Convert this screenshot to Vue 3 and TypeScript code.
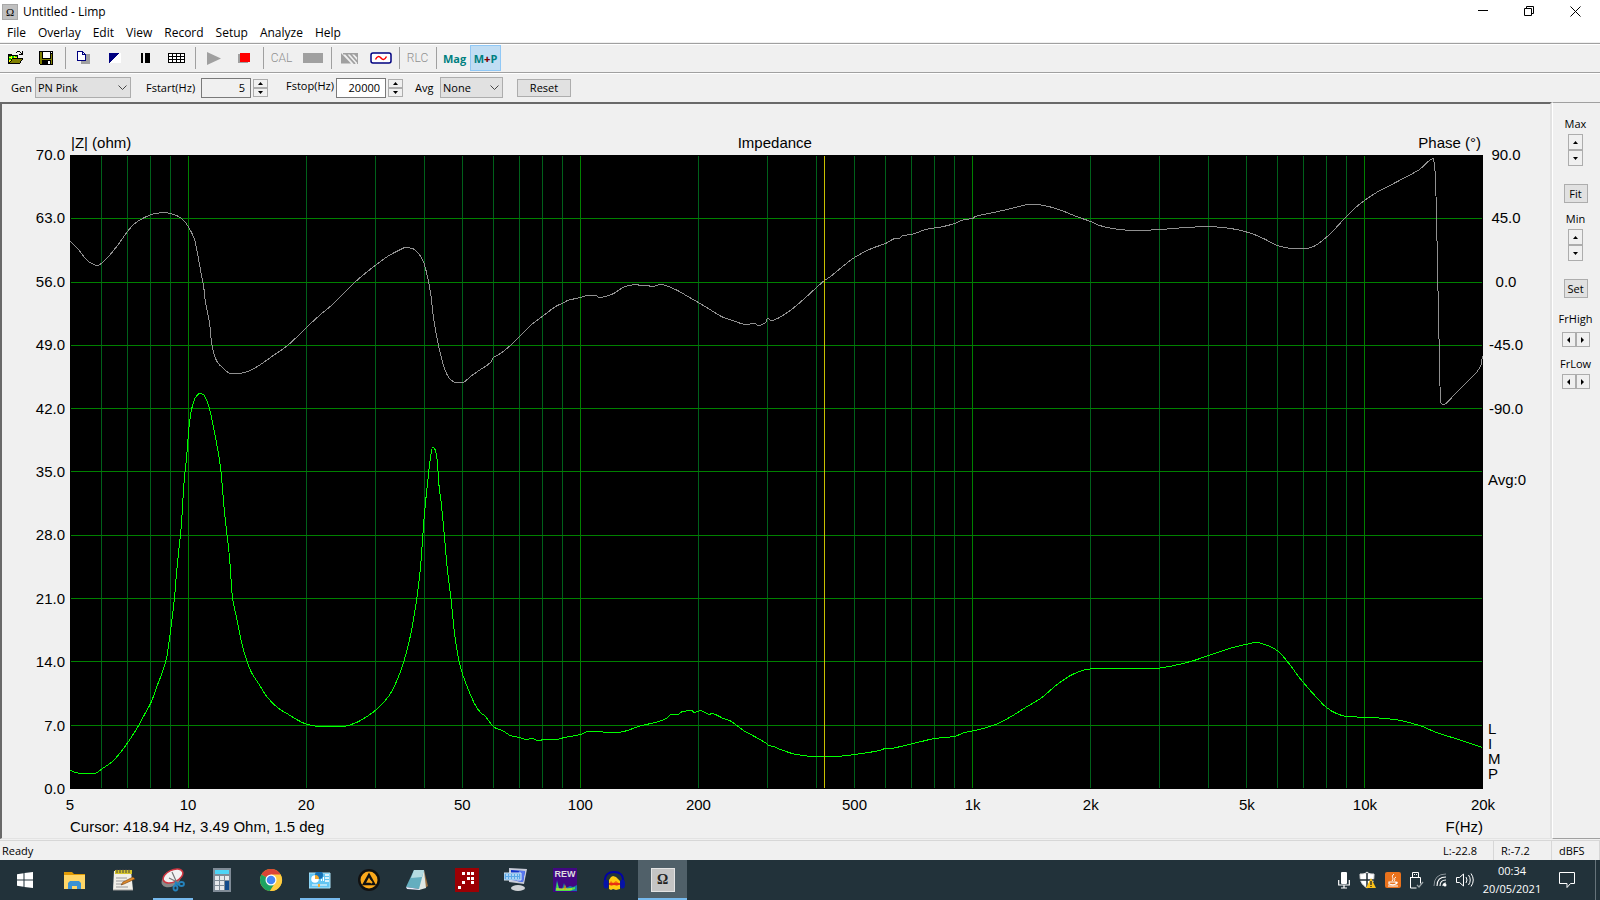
<script setup lang="ts">
import { ref } from 'vue'

type Point = [number, number]

const W = 1413
const H = 634
const F_MIN = 5
const F_MAX = 20000

const menus = ['File', 'Overlay', 'Edit', 'View', 'Record', 'Setup', 'Analyze', 'Help']
const magLabels = ['70.0', '63.0', '56.0', '49.0', '42.0', '35.0', '28.0', '21.0', '14.0', '7.0', '0.0']
const phaseLabels = ['90.0', '45.0', '0.0', '-45.0', '-90.0']
const freqLabels = [
  { f: 5, text: '5' }, { f: 10, text: '10' }, { f: 20, text: '20' }, { f: 50, text: '50' },
  { f: 100, text: '100' }, { f: 200, text: '200' }, { f: 500, text: '500' }, { f: 1000, text: '1k' },
  { f: 2000, text: '2k' }, { f: 5000, text: '5k' }, { f: 10000, text: '10k' }, { f: 20000, text: '20k' },
]

const generator = ref('PN Pink')
const averaging = ref('None')
const fStart = ref('5')
const fStop = ref('20000')

const ratio = (f: number): number => Math.log(f / F_MIN) / Math.log(F_MAX / F_MIN)
const xOf = (f: number): number => Math.round(ratio(f) * (W - 1)) + 0.5

const verticals: { x: number; major: boolean }[] = []
for (const decade of [1, 10, 100, 1000, 10000]) {
  for (let n = 1; n < 10; n++) {
    const f = n * decade
    if (f > F_MIN && f < F_MAX) verticals.push({ x: xOf(f), major: n === 1 })
  }
}
const horizontals = Array.from({ length: 9 }, (_, i) => Math.floor((i + 1) * 63.3 + 0.49) + 0.5)
const cursorX = xOf(418.94)

const phase: Point[] = [
  [0, 86], [7, 93], [18, 106], [27, 110], [32, 107], [38, 101], [47, 90], [57, 76], [63, 69], [74, 62],
  [85, 58], [93, 57], [100, 58], [108, 61], [114, 66], [120, 75], [124, 84], [127, 98], [131, 120], [133, 130],
  [135, 147], [139, 167], [141, 187], [144, 200], [147, 207], [153, 213], [160, 218], [167, 218], [177, 216],
  [190, 209], [200, 202], [217, 190], [236, 172], [250, 159], [262, 149], [283, 128], [297, 116], [306, 109],
  [317, 101], [330, 94], [335, 92], [342, 93], [347, 97], [352, 104], [355, 113], [360, 137], [363, 162],
  [368, 190], [374, 213], [379, 223], [385, 227], [392, 227], [400, 221], [410, 214], [420, 207], [423, 202],
  [430, 198], [441, 189], [450, 180], [460, 170], [473, 160], [487, 150], [492, 148], [497, 145], [510, 142],
  [517, 140], [525, 140], [529, 142], [541, 139], [555, 131], [566, 129], [570, 130], [576, 130], [582, 131],
  [590, 129], [605, 134], [619, 142], [628, 147], [641, 155], [653, 162], [662, 165], [676, 169], [684, 168],
  [688, 170], [695, 167], [697, 163], [701, 165], [707, 163], [721, 154], [734, 143], [746, 132], [754, 125],
  [760, 121], [771, 112], [784, 102], [801, 93], [815, 88], [825, 83], [829, 83], [832, 80], [841, 79],
  [855, 74], [873, 71], [884, 68], [894, 64], [902, 63], [905, 61], [923, 57], [941, 53], [959, 49], [966, 49],
  [978, 51], [991, 55], [1006, 61], [1020, 66], [1029, 70], [1049, 74], [1065, 75], [1090, 74], [1116, 72],
  [1138, 71], [1152, 72], [1166, 74], [1181, 78], [1195, 84], [1207, 90], [1222, 93], [1236, 93], [1245, 90],
  [1252, 85], [1261, 77], [1274, 63], [1284, 53], [1294, 45], [1306, 37], [1327, 26], [1349, 14], [1363, 3],
  [1364, 11], [1365, 22], [1366, 63], [1367, 107], [1368, 162], [1369, 203], [1370, 247], [1373, 249],
  [1384, 239], [1399, 224], [1410, 211], [1412, 201],
]

const impedance: Point[] = [
  [0, 615], [5, 617], [11, 618], [24, 618], [32, 613], [42, 606], [53, 593], [60, 583],
  [67, 572], [74, 559], [81, 546], [86, 532], [91, 519], [96, 503], [98, 490], [101, 468], [104, 442],
  [106, 418], [109, 388], [111, 368], [112, 350], [114, 322], [116, 303], [119, 267], [122, 250], [125, 242],
  [129, 238], [133, 239], [137, 247], [139, 253], [142, 267], [145, 282], [150, 312], [154, 357], [159, 402],
  [162, 442], [166, 462], [170, 482], [174, 498], [181, 517], [188, 528], [197, 542], [207, 552], [218, 559],
  [237, 569], [250, 571], [272, 571], [286, 567], [298, 560], [306, 554], [318, 541], [326, 526], [333, 507],
  [340, 480], [346, 445], [350, 412], [352, 385], [354, 358], [357, 328], [360, 302], [362, 292], [364, 293],
  [367, 307], [368, 325], [371, 350], [374, 382], [377, 415], [381, 448], [384, 478], [390, 512], [397, 532],
  [405, 550], [411, 558], [414, 560], [424, 572], [432, 575], [440, 580], [449, 582], [456, 584], [461, 583],
  [468, 585], [474, 584], [485, 584], [494, 582], [510, 579], [518, 576], [546, 577], [553, 576], [571, 570],
  [585, 567], [596, 563], [601, 559], [607, 559], [612, 556], [621, 555], [624, 557], [630, 555], [639, 559],
  [641, 558], [653, 563], [659, 565], [673, 575], [696, 588], [698, 590], [703, 591], [710, 594], [726, 599],
  [744, 601], [764, 601], [784, 599], [809, 595], [815, 593], [820, 593], [830, 591], [851, 586], [864, 583],
  [884, 581], [894, 577], [909, 574], [925, 569], [939, 562], [955, 552], [970, 543], [988, 528], [1002, 519],
  [1016, 514], [1024, 513], [1052, 513], [1084, 513], [1093, 512], [1120, 506], [1141, 499], [1159, 493],
  [1175, 489], [1186, 487], [1197, 490], [1208, 496], [1216, 505], [1232, 526], [1247, 543], [1256, 552],
  [1266, 558], [1276, 561], [1300, 562], [1324, 564], [1349, 570], [1366, 577], [1388, 584], [1412, 592],
]

// Monotone cubic interpolation: smooth between samples without overshooting them.
function toCurve(pts: Point[]): string {
  const slopes = pts.slice(1).map(([x, y], i) => (y - pts[i][1]) / (x - pts[i][0]))
  const tangents = pts.map((_, i) => {
    if (i === 0) return slopes[0]
    if (i === pts.length - 1) return slopes[i - 1]
    const a = slopes[i - 1]
    const b = slopes[i]
    return a * b <= 0 ? 0 : (2 * a * b) / (a + b)
  })
  let d = `M${pts[0][0] + 0.5} ${pts[0][1] + 0.5}`
  for (let i = 1; i < pts.length; i++) {
    const [x0, y0] = pts[i - 1]
    const [x1, y1] = pts[i]
    const h = (x1 - x0) / 3
    d += `C${x0 + h + 0.5} ${y0 + h * tangents[i - 1] + 0.5} ${x1 - h + 0.5} ${y1 - h * tangents[i] + 0.5} ${x1 + 0.5} ${y1 + 0.5}`
  }
  return d
}
</script>

<template>
  <div class="window">
    <header class="titlebar">
      <span class="app-icon">Ω</span>
      <h1>Untitled - Limp</h1>
      <div class="caption-buttons">
        <button aria-label="Minimize"><svg width="11" height="11"><path d="M0 4.500h10" stroke="#000" /></svg></button>
        <button aria-label="Restore"><svg width="11" height="11"><path d="M.5 2.500h7v7h-7zM2.500 2V.5h7v7H8" fill="none" stroke="#000" /></svg></button>
        <button aria-label="Close"><svg width="11" height="11"><path d="M.5.5l10 10M10.500.5l-10 10" stroke="#000" /></svg></button>
      </div>
    </header>

    <nav class="menubar">
      <button v-for="m in menus" :key="m">{{ m }}</button>
    </nav>

    <div class="toolbar">
      <button class="tool" aria-label="Open">
        <svg width="18" height="16" shape-rendering="crispEdges">
          <path d="M1 4h4v1h6v3H6l-4 6H1z" fill="#ff0" /><path d="M2 5h2v2H2zM5 6h2v2H5zM8 6h2v1H8zM2 8h2v2H2z" fill="#0c0" />
          <path d="M6 8h10l-4 6H2z" fill="#808000" /><path d="M1 4h4v1h6v1H1zM1 4h1v10H1zM10 5h1v3h-1zM5 8h11v1H5zM4 9h1v2H4zM3 11h1v1H3zM2 12h1v2H2zM15 9h1v1h-1zM14 10h1v1h-1zM13 11h1v2h-1zM12 13h1v1h-1zM1 13h11v1H1zM9 2h1v1H9zM10 1h3v1h-3zM13 2h1v1h-1zM12 4h4v1h-4zM15 1h1v4h-1zM14 3h1v1h-1z" />
        </svg>
      </button>
      <button class="tool" aria-label="Save">
        <svg width="15" height="15" shape-rendering="crispEdges">
          <path d="M0 0h14v14H1l-1-1z" /><path d="M1 1h2v7h9V3h1v10h-1V9H3v4H1z" fill="#808000" /><path d="M4 1h7v6H4zM9 10h2v3H9zM12 1h1v1h-1z" fill="#fff" />
        </svg>
      </button>
      <i class="sep"></i>
      <button class="tool" aria-label="Copy">
        <svg width="15" height="14" shape-rendering="crispEdges">
          <path d="M5 3h9v10H5z" fill="#a0a0a0" /><path d="M1.500.5h5l3 3v6h-8zM6.500.5v3h3" fill="#fff" stroke="#000080" />
        </svg>
      </button>
      <button class="tool" aria-label="Black and white">
        <svg width="12" height="11" shape-rendering="crispEdges"><path d="M0 0h12v10H0z" fill="#fff" /><path d="M0 0h10L0 10z" fill="#000080" /></svg>
      </button>
      <button class="tool" aria-label="Overlay bars">
        <svg width="11" height="11" shape-rendering="crispEdges"><path d="M1 0h2v10H1zM5 0h5v10H5z" /></svg>
      </button>
      <button class="tool" aria-label="Grid">
        <svg width="18" height="11" shape-rendering="crispEdges">
          <path d="M.5.5h16v9H.5zM.5 3.500h16M.5 6.500h16M4.500.5v9M8.500.5v9M12.500.5v9" fill="#fff" stroke="#000" />
        </svg>
      </button>
      <i class="sep"></i>
      <button class="tool" aria-label="Start recording"><svg width="16" height="13"><path d="M1 0l14 6.500L1 13z" fill="#a0a0a0" /></svg></button>
      <button class="tool" aria-label="Stop recording">
        <svg width="13" height="12" shape-rendering="crispEdges"><path d="M0 2h10v9H0z" fill="#a0a0a0" /><path d="M2 1h10v9H2z" fill="#f00" /></svg>
      </button>
      <i class="sep"></i>
      <button class="tool mono">CAL</button>
      <button class="tool" aria-label="Calibrated"><svg width="20" height="10"><path d="M0 0h20v10H0z" fill="#a0a0a0" /></svg></button>
      <i class="sep"></i>
      <button class="tool" aria-label="Hatching">
        <svg width="17" height="11">
          <path d="M0 0l10 10.500H0z" fill="#a0a0a0" /><path d="M2 .5h15V11M4 0l10 11M8.500 0l8 9M13 0l4 4" stroke="#a0a0a0" stroke-width="1.800" fill="none" />
        </svg>
      </button>
      <button class="tool" aria-label="Generator">
        <svg width="22" height="12"><rect x="1" y="1" width="20" height="10" rx="2" fill="#fff" stroke="#000080" stroke-width="1.500" /><path d="M5.500 7.500q2.500-5 5.500-1.500t5.500-1.500" fill="none" stroke="#f00" stroke-width="1.500" /></svg>
      </button>
      <i class="sep"></i>
      <button class="tool mono">RLC</button>
      <i class="sep"></i>
      <button class="tool mag">Mag</button>
      <button class="tool mag active">M<b>+</b>P</button>
    </div>

    <form class="settings" @submit.prevent>
      <label for="gen">Gen</label>
      <span class="select gen">
        <select id="gen" v-model="generator"><option>PN Pink</option></select>
        <svg width="9" height="6"><path d="M.5.5l4 4 4-4" fill="none" stroke="#444" /></svg>
      </span>
      <label for="fstart" class="after">Fstart(Hz)</label>
      <input id="fstart" v-model="fStart" type="text" />
      <span class="spin">
        <button type="button" aria-label="Increase start"><svg width="5" height="3"><path d="M0 3L2.500 0 5 3z" /></svg></button>
        <button type="button" aria-label="Decrease start"><svg width="5" height="3"><path d="M0 0h5L2.500 3z" /></svg></button>
      </span>
      <label for="fstop" class="after raised">Fstop(Hz)</label>
      <input id="fstop" v-model="fStop" type="text" />
      <span class="spin">
        <button type="button" aria-label="Increase stop"><svg width="5" height="3"><path d="M0 3L2.500 0 5 3z" /></svg></button>
        <button type="button" aria-label="Decrease stop"><svg width="5" height="3"><path d="M0 0h5L2.500 3z" /></svg></button>
      </span>
      <label for="avg" class="avg-label">Avg</label>
      <span class="select avg">
        <select id="avg" v-model="averaging"><option>None</option></select>
        <svg width="9" height="6"><path d="M.5.5l4 4 4-4" fill="none" stroke="#444" /></svg>
      </span>
      <button type="button" class="push reset">Reset</button>
    </form>

    <div class="body">
      <main class="chart">
        <div class="chart-head"><span>|Z| (ohm)</span><span>Impedance</span><span>Phase (°)</span></div>
        <div class="mag-axis"><span v-for="l in magLabels" :key="l">{{ l }}</span></div>
        <svg class="plot" :viewBox="`0 0 ${W} ${H}`" preserveAspectRatio="none" shape-rendering="crispEdges">
          <rect :width="W" :height="H" />
          <line v-for="v in verticals" :key="v.x" :class="v.major ? 'major' : 'minor'" :x1="v.x" :x2="v.x" y1="1" :y2="H - 1" />
          <line v-for="y in horizontals" :key="y" class="major" x1="1" :x2="W - 1" :y1="y" :y2="y" />
          <path class="phase" :d="toCurve(phase)" />
          <path class="impedance" :d="toCurve(impedance)" />
          <line class="cursor" :x1="cursorX" :x2="cursorX" y1="1" :y2="H - 1" />
        </svg>
        <div class="right-axis">
          <div class="phase-axis"><span v-for="l in phaseLabels" :key="l">{{ l }}</span></div>
          <span class="avg-count">Avg:0</span>
          <div class="brand"><span v-for="c in 'LIMP'" :key="c">{{ c }}</span></div>
        </div>
        <div class="freq-axis">
          <span v-for="l in freqLabels" :key="l.f" :style="{ left: ratio(l.f) * 100 + '%' }">{{ l.text }}</span>
        </div>
        <div class="chart-foot"><span>Cursor: 418.94 Hz, 3.49 Ohm, 1.5 deg</span><span>F(Hz)</span></div>
      </main>

      <aside class="side">
        <span>Max</span>
        <div class="vspin">
          <button aria-label="Max up"><svg width="5" height="3"><path d="M0 3L2.500 0 5 3z" /></svg></button>
          <button aria-label="Max down"><svg width="5" height="3"><path d="M0 0h5L2.500 3z" /></svg></button>
        </div>
        <button class="push small">Fit</button>
        <span class="min">Min</span>
        <div class="vspin">
          <button aria-label="Min up"><svg width="5" height="3"><path d="M0 3L2.500 0 5 3z" /></svg></button>
          <button aria-label="Min down"><svg width="5" height="3"><path d="M0 0h5L2.500 3z" /></svg></button>
        </div>
        <button class="push small">Set</button>
        <template v-for="name in ['FrHigh', 'FrLow']" :key="name">
          <span class="fr">{{ name }}</span>
          <div class="hspin">
            <button :aria-label="name + ' left'"><svg width="3" height="6"><path d="M3 0v6L0 3z" /></svg></button>
            <button :aria-label="name + ' right'"><svg width="3" height="6"><path d="M0 0v6l3-3z" /></svg></button>
          </div>
        </template>
      </aside>
    </div>

    <footer class="status">
      <span class="ready">Ready</span><span class="left">L:-22.8</span><span class="rightlevel">R:-7.2</span><span class="unit">dBFS</span>
    </footer>

    <div class="taskbar">
      <button class="task start" aria-label="Start">
        <svg width="16" height="16"><path d="M0 2.300l6.500-1v6.200H0zM7.500 1.100L16 0v7.500H7.500zM0 8.500h6.500v6.200L0 13.700zM7.500 8.500H16V16l-8.500-1.100z" fill="#fff" /></svg>
      </button>
      <button class="task" aria-label="File Explorer">
        <svg width="24" height="24"><path d="M1 4h8l2 2h11v4H1z" fill="#e09a05" /><path d="M1 7h21v14H1z" fill="#ffd667" /><path d="M5 21v-6l2-2h9l2 2v6h-4v-3H9v3z" fill="#3a91d4" /></svg>
      </button>
      <button class="task" aria-label="Notepad++">
        <svg width="24" height="24"><path d="M2 3h17l2 19H1z" fill="#f1efe8" /><path d="M3 2h17v4H3z" fill="#d4c32b" /><path d="M5 1v4M8 1v4M11 1v4M14 1v4M17 1v4" stroke="#444" /><path d="M4 10h11M4 13h9M4 16h7M4 19h12" stroke="#999" /><path d="M9 17l2-3 10-5 2 2-11 5z" fill="#e08a28" stroke="#6f3e12" stroke-width=".6" /><path d="M1 22h20" stroke="#999" /></svg>
      </button>
      <button class="task running" aria-label="Snipping Tool">
        <svg width="24" height="24"><ellipse cx="10" cy="12" rx="10" ry="6.500" fill="#888" transform="rotate(-25 10 12)" /><ellipse cx="12" cy="8" rx="10.500" ry="6" fill="#f2f2f2" stroke="#cf3540" stroke-width="1.500" transform="rotate(-25 12 8)" /><path d="M11 4l5 11M8 10l10 5" stroke="#777" stroke-width="1.200" /><path d="M14 14l4 3M15 15l-1 3" stroke="#2583bd" stroke-width="2" /><ellipse cx="14.500" cy="20" rx="2" ry="2.500" fill="none" stroke="#2583bd" stroke-width="1.800" /><ellipse cx="20.500" cy="16" rx="2.500" ry="2" fill="none" stroke="#2583bd" stroke-width="1.800" /></svg>
      </button>
      <button class="task" aria-label="Calculator">
        <svg width="18" height="24"><path d="M0 0h18v24H0z" fill="#7f8b96" /><path d="M2 2h14v4H2z" fill="#4dd4f6" /><path d="M2 8h4v4H2zM7 8h4v4H7zM12 8h4v4h-4zM2 13h4v4H2zM7 13h4v4H7zM2 18h4v4H2zM7 18h4v4H7z" fill="#e6e9ec" /><path d="M12 13h4v9h-4z" fill="#124b8c" /></svg>
      </button>
      <button class="task" aria-label="Chrome">
        <svg width="24" height="24" viewBox="0 0 24 24"><circle cx="12" cy="12" r="11" fill="#fbc116" /><path d="M12 12L2.470 6.500A11 11 0 0121.530 6.500z" fill="#db4437" /><path d="M12 12L2.470 6.500A11 11 0 0011 23l5.300-8.500z" fill="#1da362" /><path d="M12 6.500h9.530A11 11 0 0111 23l5.500-8.500z" fill="#ffcd42" /><circle cx="12" cy="12" r="5.500" fill="#fff" /><circle cx="12" cy="12" r="4.300" fill="#4486f4" /></svg>
      </button>
      <button class="task running" aria-label="Control Panel">
        <svg width="22" height="17"><path d="M0 1h21v15H0z" fill="#64c5f2" stroke="#b0e6fb" /><circle cx="6" cy="7" r="3.800" fill="#fff" /><path d="M6 3v4h4A4 4 0 106 3z" fill="#1670b4" /><path d="M6 3a4 4 0 014 4H6z" fill="#f3aa2e" /><path d="M12 9V7h1v2zm2 0V5h1v4z" fill="#fff" /><path d="M16 3h4M16 6h4M16 9h4" stroke="#fff" stroke-width="1.500" /><path d="M3 13h15" stroke="#fff" /><path d="M10 12v3" stroke="#f3aa2e" stroke-width="2" /></svg>
      </button>
      <button class="task" aria-label="AIMP">
        <svg width="24" height="24"><circle cx="12" cy="12" r="11" fill="#111" /><circle cx="12" cy="12" r="8.500" fill="#fca91b" /><path d="M12 7l5 9H7z" fill="none" stroke="#111" stroke-width="2.500" /><path d="M12 12l3 3" stroke="#fca91b" stroke-width="2" /></svg>
      </button>
      <button class="task" aria-label="Notepad">
        <svg width="24" height="24"><path d="M18 2l4 16-3 2z" fill="#9b7041" /><path d="M8 2h10l2 18-7 2z" fill="#e0e8e4" /><path d="M8 2h10l-5 19L0 19z" fill="#64aebf" /><path d="M8 2h10l-2 7L5 10z" fill="#b5dbe1" /><path d="M0 19l13 2 1 1-13-1z" fill="#eef" /></svg>
      </button>
      <button class="task" aria-label="Arta">
        <svg width="24" height="24" shape-rendering="crispEdges"><path d="M0 0h24v24H0z" fill="#9c0004" /><path d="M7 4h3v3H7zM12 4h3v3h-3zM16 4h3v3h-3zM12 9h3v3h-3zM16 9h3v3h-3zM7 13h3v3H7zM16 13h3v3h-3zM3 18h3v3H3z" fill="#fff" /></svg>
      </button>
      <button class="task" aria-label="Remote keyboard">
        <svg width="24" height="24"><ellipse cx="14" cy="20" rx="7" ry="3" fill="#d0d3d6" /><path d="M5 0l18 1-3 15-15-2z" fill="#c8cbd8" /><path d="M7 2l14 1-2 11-12-2z" fill="#1234c8" /><path d="M15 3l6 0-2 11-6-1z" fill="#5878ed" /><path d="M0 5h17v7H0z" fill="#5aa8e8" stroke="#dce9f4" /><path d="M2 7h13M2 10h13" stroke="#fff" stroke-dasharray="2 1" /></svg>
      </button>
      <button class="task" aria-label="REW">
        <svg width="24" height="24"><path d="M0 0h24v24H0z" fill="#420783" /><path d="M2 23l2-11 2 8 3 1 2-6 2 5 4-2 3 1 4-2v6z" fill="#1678a9" /><path d="M3 23l1-9 2 7 4 0 2-4 2 4 8-2v2l-5 2z" fill="#51de46" /><path d="M11 22l1-6 1 5z" fill="#f04a16" /><path d="M3 21h16" stroke="#e9e026" /><text x="12" y="9" text-anchor="middle" font-family="Liberation Sans, sans-serif" font-size="9" font-weight="bold" fill="#ddd">REW</text></svg>
      </button>
      <button class="task" aria-label="Audacity">
        <svg width="24" height="24"><path d="M3 15C2 6 7 4 12 4s10 2 9 11" fill="none" stroke="#0002a8" stroke-width="2" /><path d="M7 21V12l2-3 2-1 3 1 2 2 2 2v8l-4 1-3-1-2 1z" fill="#ffcb12" /><path d="M7 16l2-3 2 2 3-2 4 3-3 2-3-1-3 1z" fill="#f46a0d" /><path d="M7 16h11" stroke="#e51d17" stroke-width="1.500" /><ellipse cx="4" cy="16" rx="2.500" ry="4.500" fill="#0613a6" /><ellipse cx="20.500" cy="16" rx="2.500" ry="4.500" fill="#0613a6" /></svg>
      </button>
      <button class="task active-task" aria-label="Limp"><span class="limp">Ω</span></button>

      <div class="tray">
        <svg width="12" height="18"><rect x="3" y="1" width="6" height="12" rx="1" fill="#fff" /><path d="M.7 9v5h10.600V9M6 14v3M3 17h6" fill="none" stroke="#fff" stroke-width="1.200" /></svg>
        <svg width="17" height="18"><path d="M8 1c2 2 4 2 7 2 0 7-1 10-7 14C2 13 1 10 1 3c3 0 5 0 7-2z" fill="#fff" stroke="#ddd" /><path d="M8 2v14M1 9h14" stroke="#1f2b32" stroke-width="1.500" /><path d="M12 7l5 10H7z" fill="#fcc119" /><path d="M12 10v4M12 15v1" stroke="#222" stroke-width="1.300" /></svg>
        <svg width="16" height="16"><rect width="16" height="16" rx="2" fill="#e9721c" /><path d="M9 2C5 5 10 6 7 9M11 5C8 7 11 7 9 9" fill="none" stroke="#fff" /><path d="M4 10h7v2q-3 1.500-7 0zM11 10q2.500 0 0 2M3 14h10" fill="none" stroke="#fff" stroke-width="1.200" /></svg>
        <svg width="14" height="17"><path d="M2.500 5V.5h6V5M.5 5.500h10v6M.5 5v11h6M4 2.500h1M6 2.500h1" fill="none" stroke="#fff" /><path d="M7 13l2 2 4-5" fill="none" stroke="#9ba3a7" stroke-width="1.300" /></svg>
        <svg width="14" height="14"><path d="M1 13Q1 1 13 1" fill="none" stroke="#879096" /><path d="M4 13Q4 4 13 4M7 13Q7 7 13 7M10 13Q10 10 13 10" fill="none" stroke="#fff" stroke-width="1.100" /><circle cx="12" cy="12" r="1.500" fill="#fff" /></svg>
        <svg width="18" height="16"><path d="M.5 5.500h3l4-3.500v12l-4-3.500h-3zM10 5q2 3 0 6M12.500 3q3.500 5 0 10M15 1.500q4.500 6.500 0 13" fill="none" stroke="#fff" /></svg>
      </div>
      <div class="clock"><span>00:34</span><span>20/05/2021</span></div>
      <button class="notify" aria-label="Notifications"><svg width="17" height="17"><path d="M.5.5h15v11h-4l-3.500 4v-4h-7.500z" fill="none" stroke="#fff" /></svg></button>
    </div>
  </div>
</template>

<style>
body { margin: 0; }
</style>

<style scoped>
* { box-sizing: border-box; }
.window {
  display: flex; flex-direction: column; height: 100vh; overflow: hidden;
  background: #f0f0f0; color: #000; font: 11px/16px "Open Sans", "Noto Sans", sans-serif;
}
button { font: inherit; color: inherit; padding: 0; border: 0; background: none; display: flex; align-items: center; justify-content: center; }
svg { flex: none; display: block; }
.titlebar { display: flex; align-items: center; height: 23px; background: #fff; padding-left: 2px; }
.app-icon { width: 16px; height: 16px; background: #c0c0c0; border: 1px solid #a8a8a8; font: 11px/14px "Liberation Serif", serif; text-align: center; }
h1 { margin: 0 auto 0 5px; font-size: 12px; font-weight: 400; }
.caption-buttons { display: flex; padding-right: 2px; }
.caption-buttons button { width: 46px; height: 20px; }
.menubar { display: flex; gap: 12px; height: 19px; padding-left: 7px; background: #fff; font-size: 12px; }
.toolbar { display: flex; align-items: center; height: 29px; border-top: 1px solid #a0a0a0; box-shadow: inset 0 1px #fff; margin-top: 1px; }
.tool { width: 31px; height: 26px; }
.sep { width: 6px; height: 22px; background: linear-gradient(#a0a0a0, #a0a0a0) center / 1px 100% no-repeat; }
.mono { font: 300 12px Roboto, sans-serif; color: #909090; }
.mag { font: bold 11px "Open Sans", sans-serif; color: #008080; }
.mag b { color: #800000; }
.active { background: #c1ddf3; border: 1px solid #90c8f6; }
.settings { display: flex; align-items: center; height: 30px; padding-left: 11px; border-top: 1px solid #a0a0a0; box-shadow: inset 0 1px #fff; }
.settings label { width: 24px; white-space: nowrap; }
.settings .after { width: 50px; margin: 0 5px 0 15px; }
.settings .raised { margin: 0 0 3px 18px; }
.settings .avg-label { width: 25px; margin-left: 12px; }
.select { position: relative; height: 21px; }
.select svg { position: absolute; right: 4px; top: 8px; pointer-events: none; }
.gen { width: 96px; }
.avg { width: 63px; }
select { appearance: none; width: 100%; height: 100%; padding: 0 2px; border: 1px solid #adadad; border-radius: 0; background: #e1e1e1; font: inherit; color: inherit; }
input { width: 50px; height: 20px; padding: 0 5px; border: 1px solid #7a7a7a; background: #f0f0f0; text-align: right; font: inherit; color: inherit; }
#fstop { background: #fff; }
.spin { width: 15px; margin-left: 2px; }
.spin button, .vspin button, .hspin button { width: 15px; border: 1px solid #adadad; background: #f0f0f0; }
.spin button { height: 9px; }
.push { border: 1px solid #adadad; background: #e1e1e1; }
.reset { width: 54px; height: 18px; margin-left: 14px; }
.body { flex: 1; display: flex; min-height: 0; }
.chart {
  flex: 1; min-width: 0; display: grid; grid-template: 51px minmax(0, 1fr) 27px 22px / 68px minmax(0, 1fr) 67px;
  border: solid; border-width: 2px 2px 1px; border-color: #696969 #e3e3e3 #e3e3e3 #696969;
  font: 15px/18px "Liberation Sans", Arial, sans-serif;
}
.chart-head, .chart-foot { grid-column: 2; display: flex; justify-content: space-between; }
.chart-head { padding: 0 2px 3px 1px; align-items: flex-end; }
.mag-axis { grid-column: 1; display: flex; flex-direction: column; justify-content: space-between; margin: -9px 0; padding-right: 5px; text-align: right; }
.plot { width: 100%; height: 100%; }
.plot line, .plot path { fill: none; stroke-width: 1px; vector-effect: non-scaling-stroke; }
.major { stroke: #008000; }
.minor { stroke: #00601a; }
.plot .phase { stroke: #909090; }
.plot .impedance { stroke: #00ff00; }
.cursor { stroke: #c8c000; }
.right-axis { display: flex; flex-direction: column; padding-left: 5px; min-height: 0; }
.phase-axis { flex: none; height: calc(40% + 18px); margin-top: -9px; width: 36px; display: flex; flex-direction: column; justify-content: space-between; text-align: center; }
.avg-count { margin-top: 53px; }
.brand { margin-top: auto; padding-bottom: 8px; display: flex; flex-direction: column; line-height: 15px; }
.freq-axis { grid-column: 2; position: relative; }
.freq-axis span { position: absolute; top: 7px; transform: translateX(-50%); }
.chart-foot { padding-top: 2px; }
.side { width: 48px; padding: 13px 2px 0 0; border-top: 1px solid #a0a0a0; border-left: 1px solid #fff; border-bottom: 1px solid #a0a0a0; display: flex; flex-direction: column; align-items: center; }
.vspin { margin-top: 2px; }
.vspin button { height: 16px; }
.small { width: 24px; height: 19px; margin-top: 18px; }
.min { margin-top: 8px; }
.fr { margin-top: 13px; }
.hspin { display: flex; margin-top: 5px; }
.hspin button { width: 14px; height: 15px; }
.hspin + .fr { margin-top: 9px; }
.hspin + .fr + .hspin { margin-top: 2px; }
.status { display: flex; height: 20px; margin-top: 1px; border-top: 1px solid #d7d7d7; line-height: 20px; }
.status span { padding-left: 7px; border-right: 1px solid #d7d7d7; }
.status .ready { flex: 1; padding-left: 2px; border: 0; }
.status .left { width: 58px; }
.status .rightlevel { width: 58px; }
.status .unit { width: 48px; }
.taskbar { display: flex; height: 40px; background: #22323a; color: #fff; }
.task { width: 49px; height: 40px; }
.start { width: 50px; }
.running { background: linear-gradient(#76b9ed, #76b9ed) center bottom / 40px 2px no-repeat; }
.active-task { background: linear-gradient(#76b9ed, #76b9ed) center bottom / 100% 2px no-repeat #506069; }
.limp { width: 24px; height: 24px; background: #c4c4c4; border: 1px solid #e4e4e4; color: #222; font: bold 14px/22px "Liberation Serif", serif; }
.tray { margin-left: auto; display: flex; align-items: center; gap: 9px; }
.clock { width: 76px; font-size: 11px; line-height: 18px; padding-top: 2px; display: flex; flex-direction: column; align-items: center; }
.notify { width: 46px; margin-right: 4px; padding-right: 10px; border-right: 1px solid #66737a; }
</style>
